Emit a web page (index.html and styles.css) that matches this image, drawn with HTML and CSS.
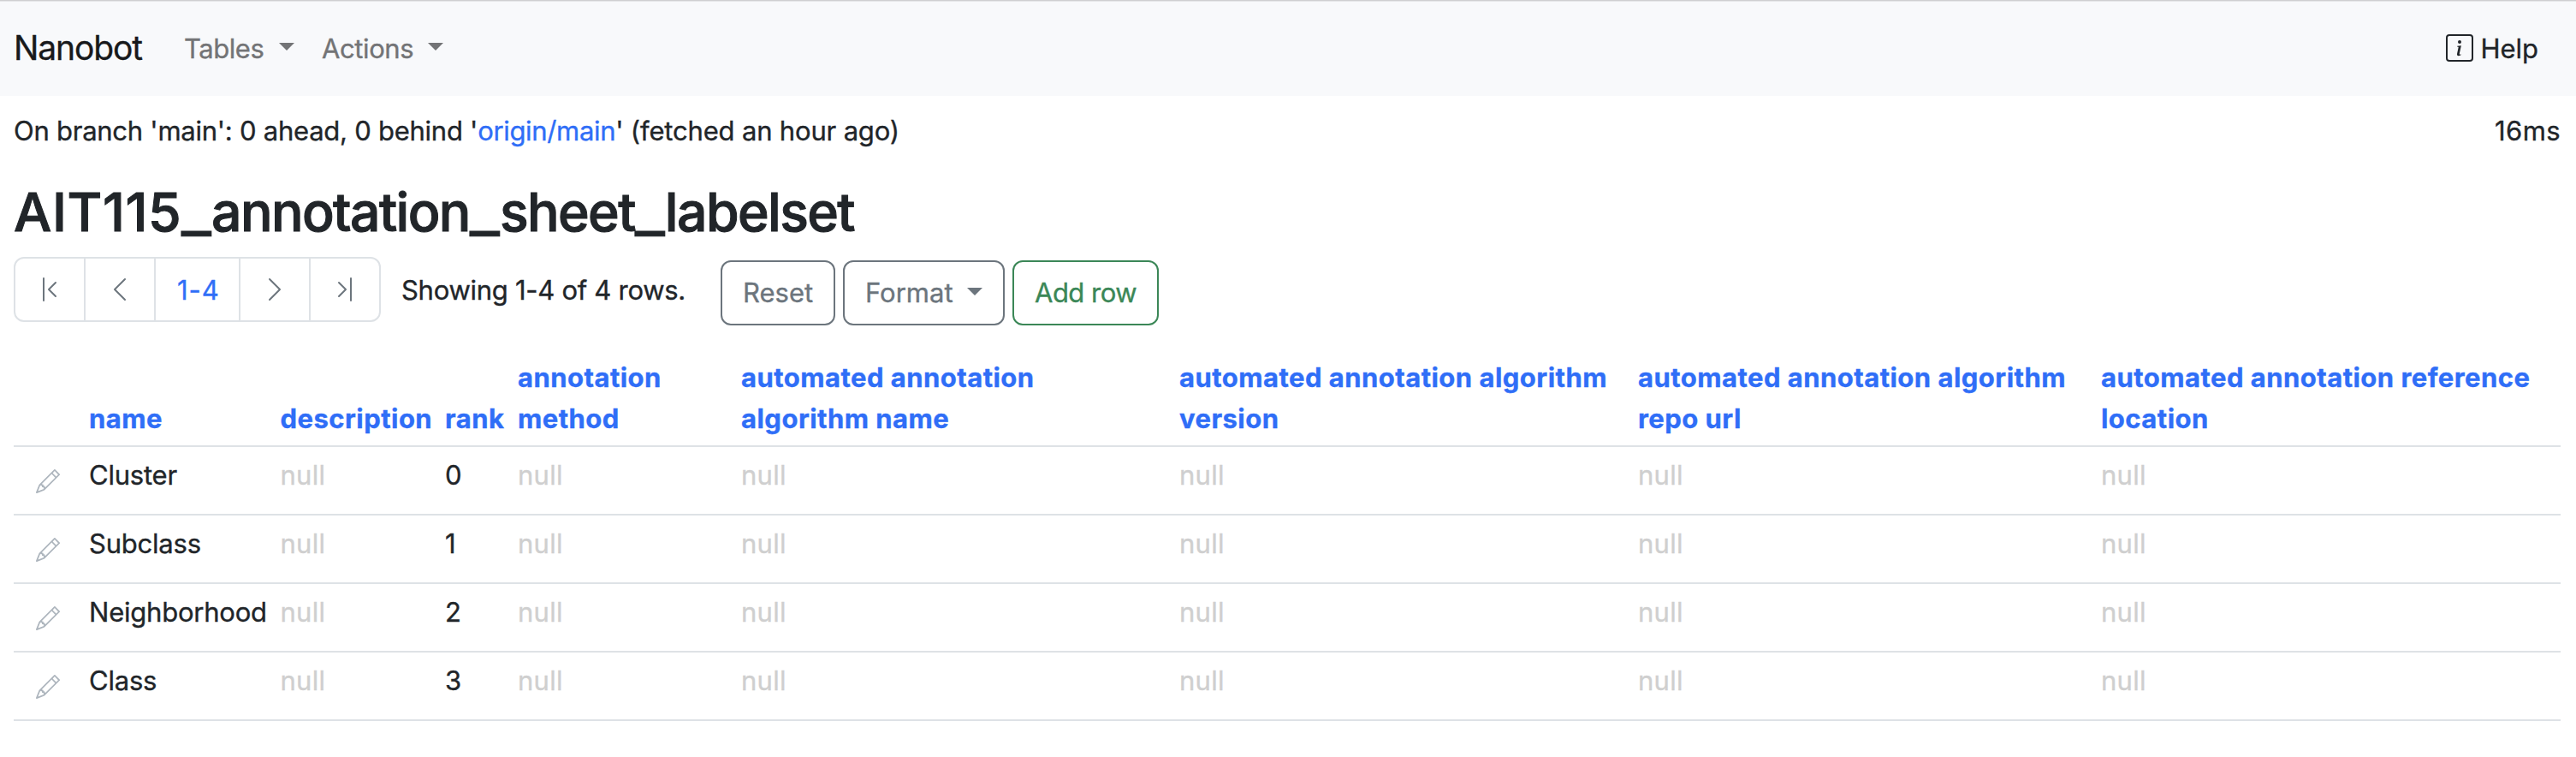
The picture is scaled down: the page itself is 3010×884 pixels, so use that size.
FILE: index.html
```html
<!DOCTYPE html>
<html lang="en">
<head>
<meta charset="utf-8">
<title>AIT115_annotation_sheet_labelset</title>
<link rel="stylesheet" href="styles.css">
</head>
<body>
<svg class="sprite" aria-hidden="true">
  <symbol id="pencil" viewBox="0 0 16 16"><path d="M12.146.146a.5.5 0 0 1 .708 0l3 3a.5.5 0 0 1 0 .708l-10 10a.5.5 0 0 1-.168.11l-5 2a.5.5 0 0 1-.65-.65l2-5a.5.5 0 0 1 .11-.168zM11.207 2.5 13.5 4.793 14.793 3.5 12.5 1.207zm1.586 3L10.5 3.207 4 9.707V10h.5a.5.5 0 0 1 .5.5v.5h.5a.5.5 0 0 1 .5.5v.5h.293zm-9.761 5.175-.106.106-1.528 3.821 3.821-1.528.106-.106A.5.5 0 0 1 5 12.5V12h-.5a.5.5 0 0 1-.5-.5V11h-.5a.5.5 0 0 1-.468-.325"/></symbol>
</svg>
<nav class="navbar">
  <a class="brand">Nanobot</a>
  <a class="nav-link tables"><span>Tables</span><i class="caret"></i></a>
  <a class="nav-link actions"><span>Actions</span><i class="caret"></i></a>
  <a class="help">
    <svg class="icon" viewBox="0 0 16 16"><path d="M14 1a1 1 0 0 1 1 1v12a1 1 0 0 1-1 1H2a1 1 0 0 1-1-1V2a1 1 0 0 1 1-1zM2 0a2 2 0 0 0-2 2v12a2 2 0 0 0 2 2h12a2 2 0 0 0 2-2V2a2 2 0 0 0-2-2z"/><path d="m8.93 6.588-2.29.287-.082.38.45.083c.294.07.352.176.288.469l-.738 3.468c-.194.897.105 1.319.808 1.319.545 0 1.178-.252 1.465-.598l.088-.416c-.2.176-.492.246-.686.246-.275 0-.375-.193-.304-.533zM9 4.5a1 1 0 1 1-2 0 1 1 0 0 1 2 0"/></svg>
    <span>Help</span>
  </a>
</nav>
<main class="container">
  <div class="status">
    <div><span class="st-a">On branch 'main': 0 ahead, 0 behind '</span><a class="st-link">origin/main</a><span class="st-b">' (fetched an hour ago)</span></div>
    <div class="timing">16ms</div>
  </div>
  <h2 class="title"><span class="code">AIT115</span><span class="us">_</span><span>annotation</span><span class="us">_</span><span>sheet</span><span class="us">_</span><span>labelset</span></h2>
  <div class="toolbar">
    <div class="pagination">
      <a class="page"><svg class="icon" viewBox="0 0 16 16"><path d="M11.854 3.646a.5.5 0 0 1 0 .708L8.207 8l3.647 3.646a.5.5 0 0 1-.708.708l-4-4a.5.5 0 0 1 0-.708l4-4a.5.5 0 0 1 .708 0M4.5 1a.5.5 0 0 0-.5.5v13a.5.5 0 0 0 1 0v-13a.5.5 0 0 0-.5-.5"/></svg></a>
      <a class="page"><svg class="icon" viewBox="0 0 16 16"><path d="M11.354 1.646a.5.5 0 0 1 0 .708L5.707 8l5.647 5.646a.5.5 0 0 1-.708.708l-6-6a.5.5 0 0 1 0-.708l6-6a.5.5 0 0 1 .708 0"/></svg></a>
      <a class="page current">1-4</a>
      <a class="page"><svg class="icon" viewBox="0 0 16 16"><path d="M4.646 1.646a.5.5 0 0 1 .708 0l6 6a.5.5 0 0 1 0 .708l-6 6a.5.5 0 0 1-.708-.708L10.293 8 4.646 2.354a.5.5 0 0 1 0-.708"/></svg></a>
      <a class="page"><svg class="icon" viewBox="0 0 16 16"><path d="M4.146 3.646a.5.5 0 0 0 0 .708L7.793 8l-3.647 3.646a.5.5 0 0 0 .708.708l4-4a.5.5 0 0 0 0-.708l-4-4a.5.5 0 0 0-.708 0M11.5 1a.5.5 0 0 1 .5.5v13a.5.5 0 0 1-1 0v-13a.5.5 0 0 1 .5-.5"/></svg></a>
    </div>
    <div class="showing">Showing 1-4 of 4 rows.</div>
    <div class="buttons">
      <button class="btn reset">Reset</button>
      <button class="btn format"><span>Format</span><i class="caret"></i></button>
      <button class="btn add">Add row</button>
    </div>
  </div>
  <table class="table">
    <colgroup><col class="c-edit"><col class="c-name"><col class="c-desc"><col class="c-rank"><col class="c-method"><col class="c-alg"><col class="c-version"><col class="c-repo"><col></colgroup>
    <thead>
      <tr><th></th><th>name</th><th>description</th><th>rank</th><th>annotation<br>method</th><th>automated annotation<br>algorithm name</th><th>automated annotation algorithm<br>version</th><th>automated annotation algorithm<br>repo url</th><th>automated annotation reference<br>location</th></tr>
    </thead>
    <tbody>
      <tr><td class="edit"><svg class="pencil"><use href="#pencil"/></svg></td><td>Cluster</td><td class="null">null</td><td>0</td><td class="null">null</td><td class="null">null</td><td class="null">null</td><td class="null">null</td><td class="null">null</td></tr>
      <tr><td class="edit"><svg class="pencil"><use href="#pencil"/></svg></td><td>Subclass</td><td class="null">null</td><td>1</td><td class="null">null</td><td class="null">null</td><td class="null">null</td><td class="null">null</td><td class="null">null</td></tr>
      <tr><td class="edit"><svg class="pencil"><use href="#pencil"/></svg></td><td>Neighborhood</td><td class="null">null</td><td>2</td><td class="null">null</td><td class="null">null</td><td class="null">null</td><td class="null">null</td><td class="null">null</td></tr>
      <tr><td class="edit"><svg class="pencil"><use href="#pencil"/></svg></td><td>Class</td><td class="null">null</td><td>3</td><td class="null">null</td><td class="null">null</td><td class="null">null</td><td class="null">null</td><td class="null">null</td></tr>
    </tbody>
  </table>
</main>
</body>
</html>
```
FILE: styles.css
```css
* { box-sizing: border-box; }
body {
  margin: 0;
  background: #fff;
  color: #212529;
  font: 400 31px/48px Inter, sans-serif;
  -webkit-text-stroke: 0.35px;
}
.sprite { display: none; }
.icon { display: block; width: 32px; height: 32px; fill: currentColor; }

.navbar {
  display: flex;
  align-items: center;
  height: 112px;
  padding: 0 44px 0 16px;
  background: #f8f9fb;
  box-shadow: inset 0 1px #cfcfd1, inset 0 2px #e6e7e9;
}
.brand {
  width: 152px;
  margin-right: 31px;
  font-size: 39px;
  letter-spacing: -1.1px;
  color: #18191b;
}
.nav-link {
  display: flex;
  align-items: center;
  padding: 1px 16px 0;
  color: #737476;
}
.tables span { width: 111px; letter-spacing: -0.45px; }
.actions span { width: 124px; letter-spacing: -0.4px; }
.caret {
  border: 9px solid transparent;
  border-top-color: currentColor;
  border-bottom: 0;
  margin-bottom: 4px;
}
.help { display: flex; align-items: center; gap: 8px; margin-left: auto; }
.help span { padding-top: 1px; }

.container { padding: 17px 18px 0 16px; }
.status { display: flex; justify-content: space-between; white-space: pre; }
.st-a { letter-spacing: -0.25px; }
.st-link { color: #2f6ef7; letter-spacing: -0.33px; }
.st-b { letter-spacing: -0.17px; }
.timing { letter-spacing: 0.4px; }

.title {
  display: flex;
  margin: 32px 0 14px;
  font-size: 62.5px;
  font-weight: 500;
  line-height: 77px;
  letter-spacing: -1.6px;
  -webkit-text-stroke: 1px;
}
.title .code { width: 196px; letter-spacing: 0.6px; }
.title .us {
  width: 35px;
  letter-spacing: 0;
  transform: scaleX(1.2);
  transform-origin: left;
}

.toolbar { display: flex; align-items: flex-start; height: 80px; }
.pagination {
  display: flex;
  height: 76px;
  border: 2px solid #dee2e6;
  border-radius: 12px;
}
.page {
  display: flex;
  align-items: center;
  padding: 0 24px;
  color: #6c757d;
  border-left: 2px solid #dee2e6;
}
.page:first-child { border-left: 0; }
.current {
  width: 99px;
  padding: 1px 0 0 25px;
  color: #2f6ef7;
  letter-spacing: 0.9px;
  white-space: nowrap;
}
.showing { width: 373px; margin-left: 24px; padding-top: 15px; letter-spacing: -0.28px; }
.buttons { display: flex; gap: 9px; padding-top: 4px; }
.btn {
  display: flex;
  align-items: center;
  height: 76px;
  padding: 0 24px;
  font: inherit;
  color: #6c757d;
  background: transparent;
  border: 2px solid;
  border-radius: 12px;
}
.reset { width: 134px; }
.format { width: 189px; padding-right: 20px; }
.format span { width: 119px; text-align: left; }
.format .caret { flex: none; }
.add { width: 171px; color: #3b8757; letter-spacing: -0.5px; white-space: nowrap; }

.table {
  width: 100%;
  margin-top: 28px;
  table-layout: fixed;
  border-spacing: 0;
}
.table th, .table td {
  padding: 9px 8px 7px;
  text-align: left;
  white-space: nowrap;
  border-bottom: 2px solid #dee2e6;
}
.table th {
  height: 114px;
  vertical-align: bottom;
  font-weight: 700;
  color: #2f6ef7;
  letter-spacing: 0.47px;
}
.table td { height: 80px; vertical-align: top; letter-spacing: -0.22px; }
.table td.null { color: #cfcfcf; letter-spacing: 0.25px; }
.table td.edit { padding: 26px 0 0 26px; }
.pencil { display: block; width: 28px; height: 28px; fill: #adb5bd; }
.c-edit { width: 80px; }
.c-name { width: 223.5px; }
.c-desc { width: 192.5px; }
.c-rank { width: 85px; }
.c-method { width: 261px; }
.c-alg { width: 512px; }
.c-version { width: 536px; }
.c-repo { width: 541px; }
```
